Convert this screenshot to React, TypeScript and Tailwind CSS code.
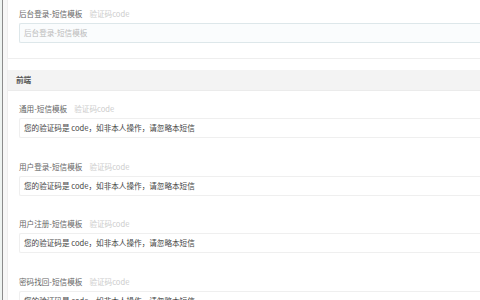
import React from 'react'

const font = { fontFamily: '"Noto Sans CJK SC", "Liberation Sans", sans-serif' }

const rows = [
  { label: '通用-短信模板', value: '您的验证码是 code，如非本人操作，请忽略本短信' },
  { label: '用户登录-短信模板', value: '您的验证码是 code，如非本人操作，请忽略本短信' },
  { label: '用户注册-短信模板', value: '您的验证码是 code，如非本人操作，请忽略本短信' },
  { label: '密码找回-短信模板', value: '您的验证码是 code，如非本人操作，请忽略本短信' },
]

const FieldLabel: React.FC<{ text: string }> = ({ text }) => (
  <div className="flex items-center gap-[7px] h-[12px] text-[7.6px] leading-[12px] whitespace-nowrap">
    <span className="text-[#666]">{text}</span>
    <span className="text-[#ccc]">验证码code</span>
  </div>
)

export default function App() {
  return (
    <div className="w-[480px] h-[300px] overflow-hidden bg-white flex" style={font}>
      {/* left edge */}
      <div className="w-[2px] shrink-0 bg-[#eef3f1]" />
      <div className="w-[1px] shrink-0 bg-[#8c8c8c]" />
      <div className="w-[4px] shrink-0 bg-[#f7f7f7]" />

      <div className="flex-1 flex flex-col min-w-0">
        {/* backend card tail */}
        <div className="h-[59px] shrink-0 border-l border-b border-[#eeeeee] pl-[11px] pt-[8px]">
          <FieldLabel text="后台登录-短信模板" />
          <div className="mt-[3px] h-[20px] border border-r-0 border-[#dde7ea] bg-[#fafcfd] rounded-l-[2px] flex items-center pl-[4px] text-[7.6px] text-[#bbb] whitespace-nowrap">
            后台登录-短信模板
          </div>
        </div>

        <div className="h-[11px] shrink-0 border-l border-[#f3f3f3]" />

        {/* frontend section */}
        <div className="shrink-0 border-l border-[#eeeeee]">
          <div className="h-[21px] bg-[#f3f3f3] border-b border-[#ebebeb] flex items-center pl-[8px] text-[7.6px] font-bold text-[#555]">
            前端
          </div>
          <div className="flex flex-col pl-[11px] pt-[12px] gap-[22.5px]">
            {rows.map((r) => (
              <div key={r.label}>
                <FieldLabel text={r.label} />
                <div className="mt-[3px] h-[20px] border-t border-b border-l border-[#efefef] rounded-l-[2px] flex items-center pl-[4px] text-[7.6px] text-[#444] whitespace-nowrap">
                  {r.value}
                </div>
              </div>
            ))}
          </div>
        </div>
      </div>
    </div>
  )
}
